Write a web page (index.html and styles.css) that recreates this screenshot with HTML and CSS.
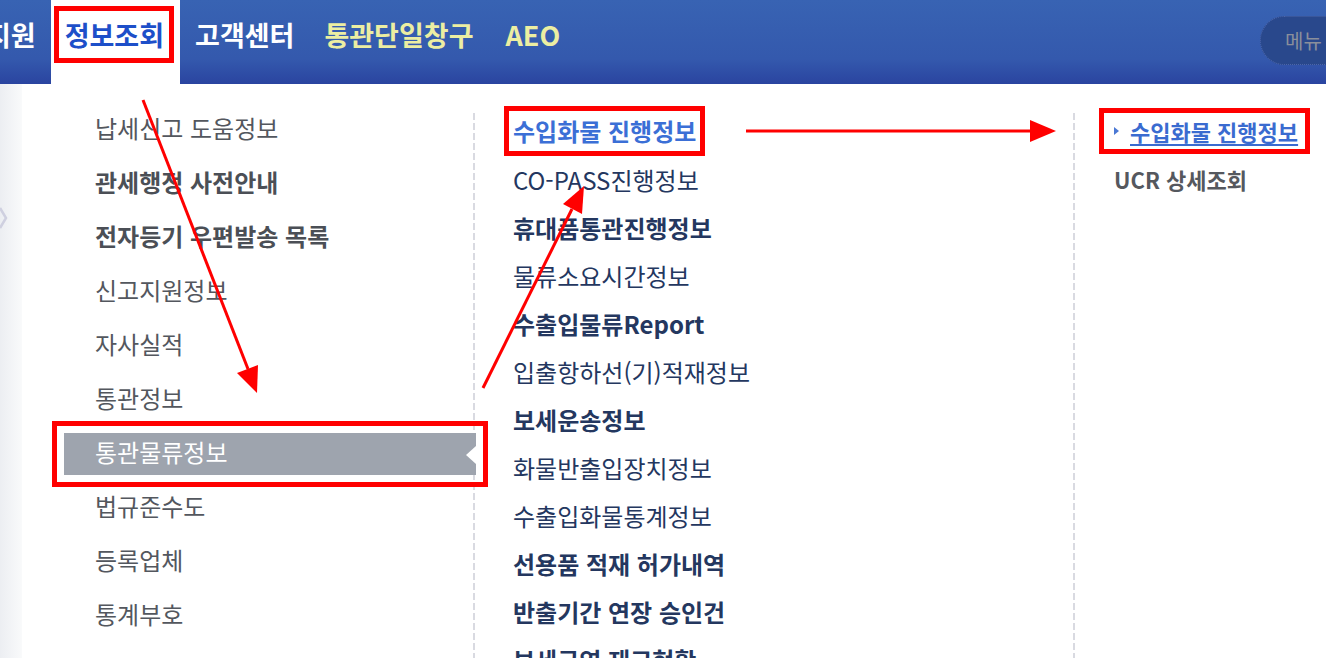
FILE: index.html
```html
<!DOCTYPE html>
<html lang="ko">
<head>
  <meta charset="UTF-8">
  <meta name="viewport" content="width=device-width, initial-scale=1.0">
  <title>정보조회 - 통관물류정보</title>
  <link rel="stylesheet" href="styles.css">
</head>
<body>
  <header class="gnb">
    <ul class="gnb-menu">
      <li class="cut">지원</li>
      <li class="on"><span class="mark-head">정보조회</span></li>
      <li>고객센터</li>
      <li class="gate">통관단일창구</li>
      <li class="gate">AEO</li>
    </ul>
    <button class="menu-btn">메뉴</button>
  </header>

  <div class="content">
    <div class="side">
      <svg class="side-arrow" width="8" height="24" viewBox="0 0 8 24">
        <path d="M0 2 L6 12 L0 22" fill="none" stroke="#cfd0e0" stroke-width="2.5"/>
      </svg>
    </div>

    <ul class="depth1">
      <li><a>납세신고 도움정보</a></li>
      <li class="b"><a>관세행정 사전안내</a></li>
      <li class="b"><a>전자등기 우편발송 목록</a></li>
      <li><a>신고지원정보</a></li>
      <li><a>자사실적</a></li>
      <li><a>통관정보</a></li>
      <li class="on"><a>통관물류정보</a></li>
      <li><a>법규준수도</a></li>
      <li><a>등록업체</a></li>
      <li><a>통계부호</a></li>
      <li><a>품목분류</a></li>
    </ul>

    <ul class="depth2">
      <li><a class="mark">수입화물 진행정보</a></li>
      <li><a>CO-PASS진행정보</a></li>
      <li class="b"><a>휴대품통관진행정보</a></li>
      <li><a>물류소요시간정보</a></li>
      <li class="b"><a>수출입물류Report</a></li>
      <li><a>입출항하선(기)적재정보</a></li>
      <li class="b"><a>보세운송정보</a></li>
      <li><a>화물반출입장치정보</a></li>
      <li><a>수출입화물통계정보</a></li>
      <li class="b"><a>선용품 적재 허가내역</a></li>
      <li class="b"><a>반출기간 연장 승인건</a></li>
      <li class="b"><a>보세구역 재고현황</a></li>
    </ul>

    <ul class="depth3">
      <li><a class="cur">수입화물 진행정보</a></li>
      <li><a class="ucr">UCR 상세조회</a></li>
    </ul>
  </div>

  <!-- red guide arrows drawn over the menu -->
  <svg class="annot" width="1326" height="658" viewBox="0 0 1326 658">
    <g stroke="#f00" stroke-width="3" fill="none">
      <line x1="143" y1="100" x2="248" y2="369"/>
      <line x1="483" y1="388" x2="572" y2="209"/>
      <line x1="746" y1="131" x2="1032" y2="131"/>
    </g>
    <g fill="#f00">
      <polygon points="257,393 258,365 237,373"/>
      <polygon points="584,186 582,214 563,204"/>
      <polygon points="1056,131 1030,120 1030,142"/>
    </g>
  </svg>
</body>
</html>
```

FILE: styles.css
```css
body {
  margin: 0;
  position: relative;
  height: 658px;
  overflow: hidden;
  background: #fff;
  font-family: "Noto Sans CJK KR", "Noto Sans", sans-serif;
}

ul {
  list-style: none;
  margin: 0;
  padding: 0;
}

a {
  text-decoration: none;
  cursor: pointer;
}

/* top navigation */
.gnb {
  display: flex;
  align-items: flex-start;
  height: 84px;
  overflow: hidden;
  background: linear-gradient(to bottom, #3863b3 0%, #3459ad 70%, #2a44a0 100%);
}

.gnb-menu {
  display: flex;
  margin-left: -29px;
}

.gnb-menu li {
  display: flex;
  align-items: center;
  box-sizing: border-box;
  height: 84px;
  padding: 0 15px 15px;
  font-size: 27px;
  font-weight: 700;
  color: #fff;
  white-space: nowrap;
}

.gnb-menu li.on {
  background: #fff;
  color: #1d4fc9;
  padding: 0 11px 15px 8px;
}

.gnb-menu li.gate {
  color: #eceea2;
}

.gnb-menu li:last-child {
  padding-left: 17px;
}

.mark-head {
  display: inline-block;
  line-height: 47px;
  padding: 0 5px 0 6px;
  outline: 5px solid #f00;
}

.menu-btn {
  flex: none;
  margin: 16px -40px 0 auto;
  width: 106px;
  height: 49px;
  padding: 0 0 0 24px;
  text-align: left;
  border: 1px dotted #4d66aa;
  border-radius: 25px;
  background: #29488c;
  color: #8a8f9b;
  font-family: "Noto Sans CJK KR", sans-serif;
  font-size: 20px;
}

/* menu columns */
.content {
  display: flex;
  height: 574px;
}

.side {
  flex: none;
  width: 22px;
  background: linear-gradient(to right, #eceef2, #f9fafb);
}

.side-arrow {
  display: block;
  margin-top: 122px;
}

.depth1 {
  flex: none;
  width: 409px;
  margin-left: 42px;
  padding-top: 17px;
}

.depth1 li {
  box-sizing: border-box;
  height: 54px;
}

.depth1 a {
  display: block;
  padding-left: 31px;
  line-height: 54px;
  font-size: 24px;
  color: #53575e;
  white-space: nowrap;
}

.depth1 li.b a {
  font-weight: 700;
  color: #4b4f56;
}

.depth1 li.on {
  padding-top: 8px;
}

.depth1 li.on a {
  position: relative;
  z-index: 1;
  margin-right: -3px;
  line-height: 38px;
  padding-bottom: 4px;
  background: #9ea4ae;
  color: #fff;
  outline: 5px solid #f00;
  outline-offset: 7px;
}

.depth1 li.on a::after {
  content: "";
  position: absolute;
  right: 0;
  top: 13px;
  border-right: 10px solid #fff;
  border-top: 9px solid transparent;
  border-bottom: 9px solid transparent;
}

.depth2,
.depth3 {
  box-sizing: border-box;
  padding-top: 23px;
  background: repeating-linear-gradient(to bottom, #d9dae1 0 7px, transparent 7px 10px) left 0 top 29px / 2px 100% no-repeat;
}

.depth2 {
  flex: none;
  width: 600px;
  padding-left: 40px;
}

.depth3 {
  flex: 1;
  padding-left: 41px;
}

.depth2 li,
.depth3 li {
  display: flex;
  align-items: center;
  height: 48px;
}

.depth2 a {
  font-size: 24px;
  color: #24375f;
  white-space: nowrap;
}

.depth2 li.b a {
  font-weight: 700;
}

.depth2 a.mark {
  display: inline-block;
  line-height: 32px;
  font-weight: 700;
  color: #3b6fd6;
  outline: 5px solid #f00;
  outline-offset: 4px;
}

.depth3 a {
  font-size: 22px;
  font-weight: 700;
  white-space: nowrap;
}

.depth3 a.cur {
  position: relative;
  display: inline-block;
  margin-left: -5px;
  padding: 0 2px 0 21px;
  line-height: 26px;
  color: #3a6bd0;
  text-decoration: underline;
  text-underline-offset: 3px;
  outline: 5px solid #f00;
  outline-offset: 5px;
}

.depth3 a.cur::before {
  content: "";
  position: absolute;
  left: 5px;
  top: 9px;
  border-left: 5px solid #4a78d4;
  border-top: 4px solid transparent;
  border-bottom: 4px solid transparent;
}

.depth3 a.ucr {
  color: #55585e;
}

.annot {
  position: absolute;
  top: 0;
  left: 0;
  pointer-events: none;
}
```
